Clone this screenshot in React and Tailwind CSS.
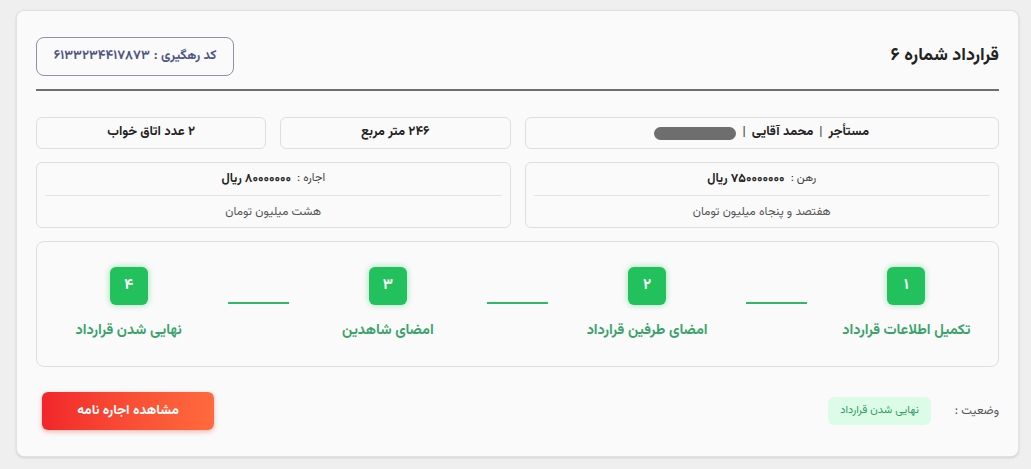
const font = { fontFamily: '"Vazirmatn", "Noto Sans Arabic", "DejaVu Sans", sans-serif' };

function InfoBox({ children, className = '' }) {
    return (
        <div className={`flex h-[32px] items-center justify-center rounded-md border border-[#dedede] bg-[#fafafa] text-[13px] font-bold text-[#222] ${className}`}>
            {children}
        </div>
    );
}

function PriceBox({ label, amount, words }) {
    return (
        <div className="col-span-2 flex h-[66px] flex-col rounded-md border border-[#dedede] bg-[#fafafa] px-[8px]">
            <div className="flex h-[32px] items-center justify-center gap-[6px] text-[11.5px] text-[#444]">
                <span>{label} :</span>
                <span className="text-[12.5px] font-bold text-[#222]">{amount} ریال</span>
            </div>
            <div className="h-px bg-[#e4e4e4]" />
            <div className="flex flex-1 items-center justify-center text-[12px] text-[#555]">{words}</div>
        </div>
    );
}

function Step({ num, label }) {
    return (
        <div className="flex flex-1 flex-col items-center">
            <div className="flex h-[38px] w-[38px] items-center justify-center rounded-md bg-[#22c15e] text-[15px] font-bold text-white shadow-[0_0_6px_rgba(34,193,94,0.45)]">
                {num}
            </div>
            <div className="mt-[15px] text-[14.5px] font-bold text-[#3aa36c]">{label}</div>
        </div>
    );
}

function Connector() {
    return (
        <div className="flex w-[76px] justify-center pt-[35px]">
            <div className="h-[2px] w-[61px] bg-[#2fb866]" />
        </div>
    );
}

export default function App() {
    const steps = [
        ['۱', 'تکمیل اطلاعات قرارداد'],
        ['۲', 'امضای طرفین قرارداد'],
        ['۳', 'امضای شاهدین'],
        ['۴', 'نهایی شدن قرارداد'],
    ];

    return (
        <div dir="rtl" style={font} className="min-h-[469px] bg-[#efefef] pb-[12px] pl-[16px] pr-[12px] pt-[10px]">
            <div className="rounded-lg border border-[#e2e2e2] bg-[#fafafa] px-[19px] pb-[26px] pt-[26px] shadow-sm">
                <div className="flex items-center justify-between pb-[13px]">
                    <h1 className="text-[18px] font-bold text-[#222]">قرارداد شماره ۶</h1>
                    <div className="flex h-[39px] w-[198px] items-center justify-center rounded-lg border border-[#8a93ab] bg-[#fafafa] text-[13px] font-bold text-[#4f5585]">
                        <span>کد رهگیری : </span>
                        <span className="mr-[4px]">۶۱۳۳۲۳۴۴۱۷۸۷۳</span>
                    </div>
                </div>
                <div className="h-[2px] bg-[#6f6f6f]" />

                <div className="mt-[26px] grid grid-cols-4 gap-x-[14px] gap-y-[13px]">
                    <InfoBox className="col-span-2 gap-[6px]">
                        <span>مستأجر</span>
                        <span className="font-normal text-[#333]">|</span>
                        <span>محمد آقایی</span>
                        <span className="font-normal text-[#333]">|</span>
                        <span className="h-[13px] w-[82px] rounded-full bg-[#6e6e6e]" />
                    </InfoBox>
                    <InfoBox>۲۴۶ متر مربع</InfoBox>
                    <InfoBox>۲ عدد اتاق خواب</InfoBox>
                    <PriceBox label="رهن" amount="۷۵۰۰۰۰۰۰۰" words="هفتصد و پنجاه میلیون تومان" />
                    <PriceBox label="اجاره" amount="۸۰۰۰۰۰۰۰" words="هشت میلیون تومان" />
                </div>

                <div className="mt-[13px] flex h-[126px] items-start rounded-lg border border-[#dedede] bg-[#fafafa] pt-[25px]">
                    {steps.map(([n, l], i) => (
                        <div key={n} className="contents">
                            {i > 0 && <Connector />}
                            <Step num={n} label={l} />
                        </div>
                    ))}
                </div>

                <div className="mt-[25px] flex items-center justify-between pl-[6px]">
                    <div className="flex items-center gap-[24px]">
                        <span className="text-[12px] text-[#555]">وضعیت :</span>
                        <span className="flex h-[28px] items-center rounded-md bg-[#dcfce7] px-[12px] text-[11px] text-[#2f9e5c]">نهایی شدن قرارداد</span>
                    </div>
                    <button className="flex h-[38px] w-[172px] items-center justify-center rounded-md bg-gradient-to-l from-[#ff6a3d] to-[#f2242b] text-[13.5px] font-bold text-white shadow-[0_2px_5px_rgba(240,60,40,0.35)]">
                        مشاهده اجاره نامه
                    </button>
                </div>
            </div>
        </div>
    );
}
